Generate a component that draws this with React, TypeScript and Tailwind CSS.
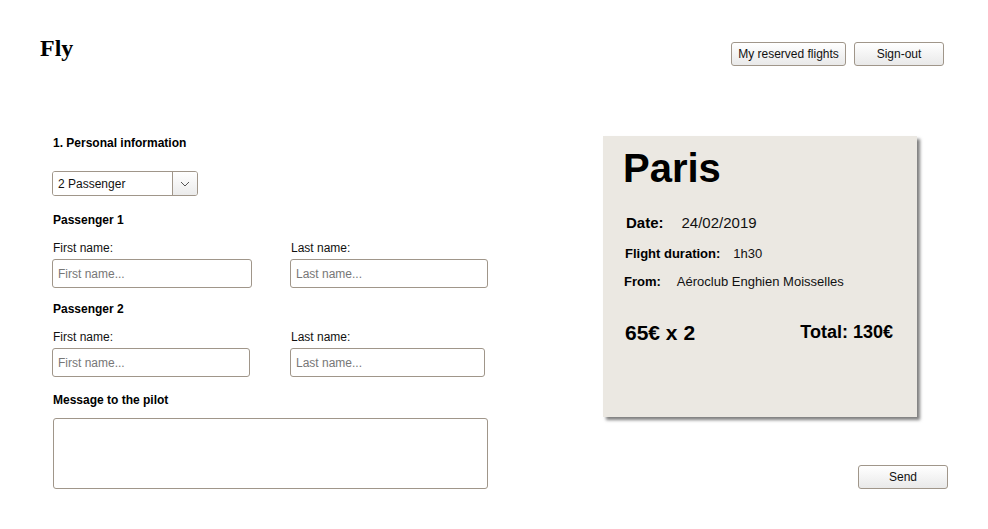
import React from "react";

const btn =
  "h-[24px] rounded-[3px] border border-[#a0968a] bg-gradient-to-b from-white to-[#e9e9e9] text-[12px] text-[#111] leading-none";
const field =
  "block h-[29px] rounded-[3px] border border-[#a0968a] bg-white pl-[5px] text-[12px] text-black placeholder:text-[#777] outline-none";

function NameRow({ firstW, lastW }: { firstW: string; lastW: string }) {
  return (
    <div className="mt-[14px] grid grid-cols-[238px_1fr]">
      <div>
        <div className="ml-[1px] text-[12px] leading-[14px] text-[#111]">First name:</div>
        <input className={`${field} mt-[4px] ${firstW}`} placeholder="First name..." />
      </div>
      <div>
        <div className="ml-[1px] text-[12px] leading-[14px] text-[#111]">Last name:</div>
        <input className={`${field} mt-[4px] ${lastW}`} placeholder="Last name..." />
      </div>
    </div>
  );
}

export default function App() {
  return (
    <div className="min-h-[529px] bg-white font-['Liberation_Sans',Arial,sans-serif] text-black">
      {/* header */}
      <div className="flex items-start justify-between pl-[40px] pr-[44px] pt-[36px]">
        <div className="font-['Liberation_Serif','Times_New_Roman',serif] text-[24px] font-bold leading-[24px]">
          Fly
        </div>
        <div className="mt-[6px] flex gap-[8px]">
          <button className={`${btn} w-[115px]`}>My reserved flights</button>
          <button className={`${btn} w-[90px]`}>Sign-out</button>
        </div>
      </div>

      <div className="mt-[70px] flex pl-[52px]">
        {/* form */}
        <div className="w-[436px]">
          <div className="ml-[1px] text-[12px] font-bold leading-[14px]">1. Personal information</div>

          <div className="mt-[21px] flex h-[25px] w-[146px] overflow-hidden rounded-[3px] border border-[#a0968a]">
            <div className="flex flex-1 items-center bg-white pl-[5px] text-[12px] text-[#111]">2 Passenger</div>
            <div className="flex w-[25px] items-center justify-center border-l border-[#a0968a] bg-gradient-to-b from-white to-[#ebebeb]">
              <svg width="10" height="6" viewBox="0 0 10 6" fill="none">
                <path d="M1 1l4 4 4-4" stroke="#555" strokeWidth="1" />
              </svg>
            </div>
          </div>

          <div className="mt-[17px] ml-[1px] text-[12px] font-bold leading-[14px]">Passenger 1</div>
          <NameRow firstW="w-[200px]" lastW="w-[198px]" />

          <div className="mt-[14px] ml-[1px] text-[12px] font-bold leading-[14px]">Passenger 2</div>
          <NameRow firstW="w-[198px]" lastW="w-[195px]" />

          <div className="mt-[16px] ml-[1px] text-[12px] font-bold leading-[14px]">Message to the pilot</div>
          <textarea className="mt-[11px] ml-[1px] block h-[71px] w-[435px] resize-none rounded-[3px] border border-[#a0968a] bg-white outline-none" />
        </div>

        {/* summary */}
        <div className="ml-[115px] flex w-[345px] flex-col">
          <div className="h-[281px] w-[314px] bg-[#ebe8e2] pl-[20px] pr-[24px] pt-[12px] shadow-[3px_3px_3px_rgba(0,0,0,0.5)]">
            <div className="text-[40px] font-bold leading-[40px]">Paris</div>
            <div className="mt-[27px] ml-[3px] flex gap-[18px] text-[15px] leading-[15px]">
              <span className="font-bold">Date:</span>
              <span className="text-[#111]">24/02/2019</span>
            </div>
            <div className="mt-[17px] ml-[2px] flex gap-[13px] text-[13px] leading-[13px]">
              <span className="font-bold">Flight duration:</span>
              <span className="text-[#111]">1h30</span>
            </div>
            <div className="mt-[15px] ml-[1px] flex gap-[16px] text-[13px] leading-[13px]">
              <span className="font-bold">From:</span>
              <span className="text-[#111]">Aéroclub Enghien Moisselles</span>
            </div>
            <div className="mt-[34px] ml-[2px] flex items-start justify-between">
              <span className="text-[21px] font-bold leading-[21px]">65€ x 2</span>
              <span className="mt-[1px] text-[18px] font-bold leading-[18px]">Total: 130€</span>
            </div>
          </div>
          <button className={`${btn} mt-[48px] w-[90px] self-end`}>Send</button>
        </div>
      </div>
    </div>
  );
}
